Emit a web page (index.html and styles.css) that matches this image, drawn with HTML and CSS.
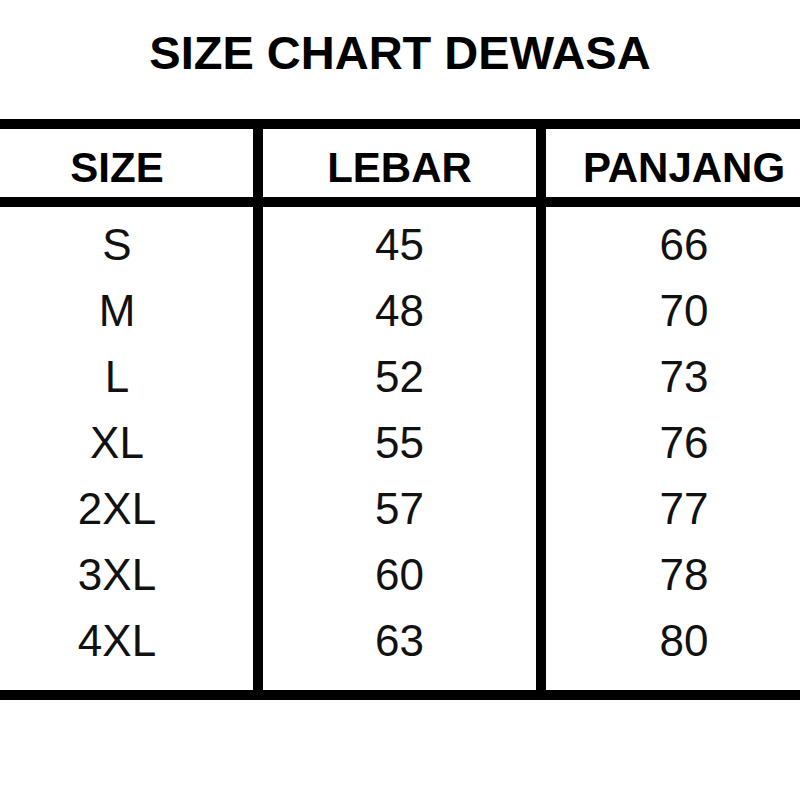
FILE: index.html
```html
<!DOCTYPE html>
<html>
<head>
<meta charset="utf-8">
<link rel="stylesheet" href="styles.css">
</head>
<body>
<div class="page">
  <h1 class="title">SIZE CHART DEWASA</h1>
  <div class="table">
    <div class="col col-size">
      <div class="head">SIZE</div>
      <div class="body">
        <div class="cell">S</div>
        <div class="cell">M</div>
        <div class="cell">L</div>
        <div class="cell">XL</div>
        <div class="cell">2XL</div>
        <div class="cell">3XL</div>
        <div class="cell">4XL</div>
      </div>
    </div>
    <div class="col col-lebar">
      <div class="head">LEBAR</div>
      <div class="body">
        <div class="cell">45</div>
        <div class="cell">48</div>
        <div class="cell">52</div>
        <div class="cell">55</div>
        <div class="cell">57</div>
        <div class="cell">60</div>
        <div class="cell">63</div>
      </div>
    </div>
    <div class="col col-panjang">
      <div class="head">PANJANG</div>
      <div class="body">
        <div class="cell">66</div>
        <div class="cell">70</div>
        <div class="cell">73</div>
        <div class="cell">76</div>
        <div class="cell">77</div>
        <div class="cell">78</div>
        <div class="cell">80</div>
      </div>
    </div>
  </div>
</div>
</body>
</html>
```
FILE: styles.css
```css
html, body {
  margin: 0;
  padding: 0;
  background: #ffffff;
}
.page {
  width: 800px;
  height: 800px;
  overflow: hidden;
  background: #ffffff;
  font-family: "Liberation Sans", Arial, sans-serif;
  color: #000000;
}
.title {
  margin: 0 0 14px 0;
  height: 105px;
  line-height: 105px;
  font-size: 47px;
  font-weight: 700;
  text-align: center;
  color: #000;
}
.table {
  display: flex;
  margin-left: -19px;
  width: 841px;
  border-top: 10px solid #000;
  border-bottom: 10px solid #000;
}
.col {
  box-sizing: border-box;
  display: flex;
  flex-direction: column;
}
.col-size { width: 282px; border-right: 10px solid #000; }
.col-lebar { width: 283px; border-right: 10px solid #000; }
.col-panjang { width: 276px; }
.head {
  box-sizing: border-box;
  height: 78px;
  padding-top: 9px;
  line-height: 59px;
  font-size: 42px;
  font-weight: 700;
  text-align: center;
  border-bottom: 10px solid #000;
}
.body {
  padding: 5px 0 16px 0;
}
.cell {
  height: 66px;
  line-height: 66px;
  font-size: 44px;
  text-align: center;
  color: #111;
}
```
